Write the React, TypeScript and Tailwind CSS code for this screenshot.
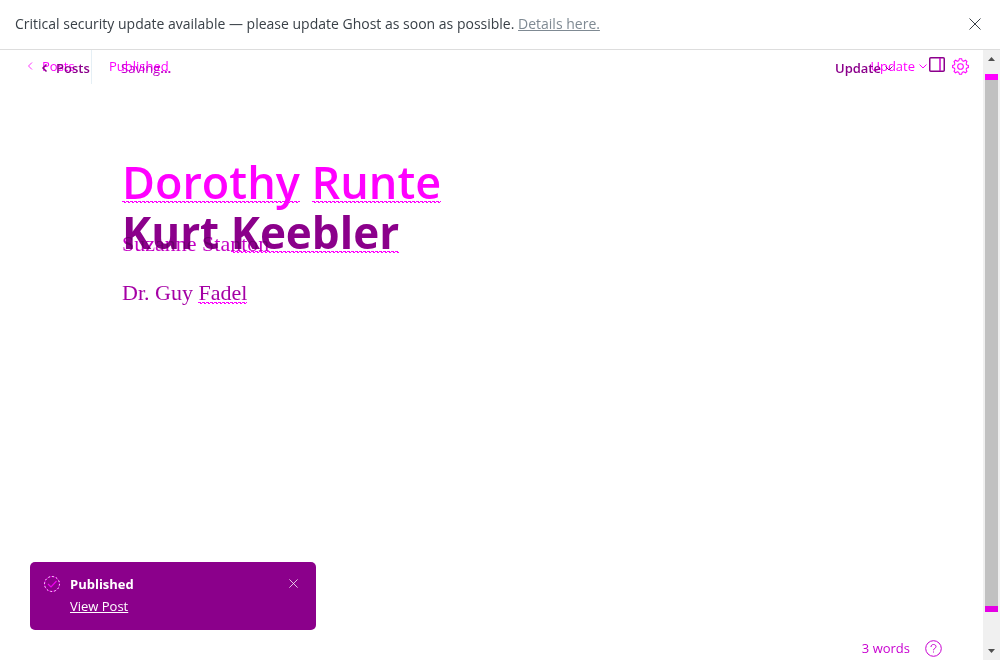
import React from "react";

function Squiggle() {
  return (
    <svg className="absolute left-0 bottom-0 h-[2px] w-full" aria-hidden="true" shapeRendering="crispEdges">
      <defs>
        <pattern id="squiggle" width="4" height="2" patternUnits="userSpaceOnUse">
          <rect x="0" y="0" width="3" height="1" fill="currentColor" />
          <rect x="2" y="1" width="2" height="1" fill="currentColor" />
        </pattern>
      </defs>
      <rect width="100%" height="2" fill="url(#squiggle)" />
    </svg>
  );
}

function Misspelled({ children, tone, box }: { children: string; tone: string; box: string }) {
  return (
    <span className={`relative inline-block ${box}`}>
      {children}
      <span className={tone}>
        <Squiggle />
      </span>
    </span>
  );
}

function Cross({ className }: { className: string }) {
  return (
    <svg className={className} viewBox="0 0 12 12" fill="none" stroke="currentColor" aria-hidden="true">
      <path d="M.5.5l11 11M11.5.5l-11 11" />
    </svg>
  );
}

function Gear() {
  return (
    <svg className="size-[17px]" viewBox="0 0 24 24" fill="none" stroke="currentColor" strokeWidth="1.5" aria-hidden="true">
      <circle cx="12" cy="12" r="4" />
      <path d="M13.6 1l.5 2a2.2 2.2 0 0 0 3 1.2l2-1 2 2-1 2a2.2 2.2 0 0 0 1 2.6l2 .6v3.2l-2 .6a2.2 2.2 0 0 0-1 2.6l1 2-2 2-2-1a2.2 2.2 0 0 0-3 1.2l-.5 2h-3.2l-.5-2a2.2 2.2 0 0 0-3-1.2l-2 1-2-2 1-2a2.2 2.2 0 0 0-1-2.6l-2-.6v-3.2l2-.6a2.2 2.2 0 0 0 1-2.6l-1-2 2-2 2 1a2.2 2.2 0 0 0 3-1.2l.5-2z" />
    </svg>
  );
}

function Banner() {
  return (
    <div className="flex h-[50px] shrink-0 items-center justify-between border-b border-[#dddddd] pr-[19px] pb-[1px] pl-[15px]">
      <p className="text-[14px] leading-[20px] text-[#394047]">
        Critical security update available — please update Ghost as soon as possible.{" "}
        <a href="#details" className="text-[#7f8a93] underline">
          Details here.
        </a>
      </p>
      <button type="button" aria-label="Dismiss" className="text-[#394047]">
        <Cross className="size-[12px]" />
      </button>
    </div>
  );
}

function Header() {
  return (
    <header className="grid h-[34px] shrink-0">
      <div className="col-start-1 row-start-1 flex items-center justify-between pr-[14px] pl-[27px] text-[13px] leading-[20px] text-[#ff00ff]">
        <div className="flex items-center self-stretch">
          <a href="#posts" className="flex w-[64px] items-center gap-[9px] pb-[2px]">
            <svg className="h-[8px] w-[6px]" viewBox="0 0 6 8" fill="none" stroke="currentColor" strokeWidth=".8" aria-hidden="true">
              <path d="M5 .5L1.5 4 5 7.5" />
            </svg>
            Posts
          </a>
          <span className="h-full w-px bg-[#e5eff5]" />
          <span className="pb-[2px] pl-[17px]">Published</span>
        </div>
        <div className="flex items-center gap-[25px] pb-[2px]">
          <button type="button" className="flex items-center gap-[4px]">
            Update
            <svg className="h-[5px] w-[8px]" viewBox="0 0 8 5" fill="none" stroke="currentColor" aria-hidden="true">
              <path d="M.5.5L4 4 7.5.5" />
            </svg>
          </button>
          <button type="button" aria-label="Settings">
            <Gear />
          </button>
        </div>
      </div>
      <div className="pointer-events-none col-start-1 row-start-1 flex items-center justify-between pt-[2px] pr-[38px] pl-[41px] text-[13px] leading-[20px] text-[#8b008b]">
        <div className="flex items-center">
          <a href="#posts" className="flex w-[80px] items-center gap-[8px] font-semibold">
            <svg className="h-[8px] w-[7px]" viewBox="0 0 7 8" fill="none" stroke="currentColor" strokeWidth="1.5" aria-hidden="true">
              <path d="M5.5.5L2 4l3.5 3.5" />
            </svg>
            Posts
          </a>
          <span className="text-[#c100c9]">
            Saving<b>...</b>
          </span>
        </div>
        <div className="flex items-center gap-[36px]">
          <button type="button" className="flex items-center gap-[4px] font-semibold">
            Update
            <svg className="h-[5px] w-[8px]" viewBox="0 0 8 5" fill="none" stroke="currentColor" aria-hidden="true">
              <path d="M.5.5L4 4 7.5.5" />
            </svg>
          </button>
          <button type="button" aria-label="Toggle sidebar" className="pb-[7px]">
            <svg className="h-[15px] w-[16px]" viewBox="0 0 16 15" fill="none" stroke="currentColor" strokeWidth="1.5" aria-hidden="true">
              <rect x=".75" y=".75" width="14.5" height="13.5" rx="1" />
              <path d="M11 1v13" stroke="#c800c8" />
            </svg>
          </button>
        </div>
      </div>
    </header>
  );
}

function Toast() {
  return (
    <div role="status" className="flex h-[68px] w-[286px] gap-[10px] rounded-[5px] bg-[#8b008b] px-[14px] pt-[12px] text-white">
      <svg className="mt-[2px] size-[16px] shrink-0" viewBox="0 0 16 16" fill="none" aria-hidden="true">
        <circle cx="8" cy="8" r="7.5" stroke="#d400d4" />
        <circle cx="8" cy="8" r="7.5" stroke="#fff" strokeDasharray="1.5 2.43" />
        <path d="M4 8L7 11l5.5-6" stroke="#f000f0" strokeWidth="1.2" />
      </svg>
      <div className="flex grow flex-col gap-[2px] text-[13px] leading-[20px]">
        <span className="font-bold">Published</span>
        <a href="#view" className="self-start underline">
          View Post
        </a>
      </div>
      <button type="button" aria-label="Close" className="mt-[5px] mr-[4px] self-start">
        <Cross className="size-[9px]" />
      </button>
    </div>
  );
}

function Scrollbar() {
  return (
    <div className="flex w-[17px] shrink-0 flex-col items-center bg-[#f0f0f0] py-[7px]" aria-hidden="true">
      <svg className="h-[4px] w-[7px] shrink-0" viewBox="0 0 7 4">
        <path d="M0 4L3.5 0 7 4z" fill="#505050" />
      </svg>
      <div className="mt-[13px] mb-[37px] w-[13px] grow border-y-[6px] border-t-[#ff00ff] border-b-[#e400e4] bg-[#c1c1c1]" />
      <svg className="h-[4px] w-[7px] shrink-0" viewBox="0 0 7 4">
        <path d="M0 0L3.5 4 7 0z" fill="#505050" />
      </svg>
    </div>
  );
}

export default function App() {
  return (
    <div className="flex h-screen flex-col bg-white font-['Open_Sans','Noto_Sans',sans-serif]">
      <Banner />
      <div className="flex min-h-0 grow">
        <div className="flex min-w-0 grow flex-col">
          <Header />
          <main className="grow px-[122px] pt-[73px]">
            <h1 className="text-[45px] leading-[50px] font-semibold text-[#ff00ff]">
              <Misspelled tone="text-[#ff00ff]" box="h-[46px] mb-[4px] align-top">Dorothy</Misspelled>{" "}
              <Misspelled tone="text-[#ff00ff]" box="h-[46px] mb-[4px] align-top">Runte</Misspelled>
            </h1>
            <div className="relative">
              <h1 className="text-[44px] leading-[50px] font-bold text-[#8b008b]">
                Kurt <Misspelled tone="text-[#ff0099]" box="h-[46px] mb-[4px] align-top">Keebler</Misspelled>
              </h1>
              <p className="absolute top-[21px] left-0 font-['Liberation_Serif',serif] text-[22px] leading-[32px] text-[#c400c4] mix-blend-multiply">
                Suzanne Stanton
              </p>
            </div>
            <p className="pt-[20px] font-['Liberation_Serif',serif] text-[22px] leading-[32px] text-[#a500a5]">
              Dr. Guy <Misspelled tone="text-[#ff00aa]" box="h-[27px] align-top">Fadel</Misspelled>
            </p>
          </main>
          <footer className="flex items-end justify-between pr-[41px] pl-[30px]">
            <div className="pb-[30px]">
              <Toast />
            </div>
            <div className="flex items-center gap-[15px] pb-[2px] text-[13px] leading-[20px] text-[#c800d0]">
              <span>3 words</span>
              <button type="button" aria-label="Help">
                <svg className="size-[17px]" viewBox="0 0 17 17" fill="none" stroke="currentColor" aria-hidden="true">
                  <circle cx="8.5" cy="8.5" r="7.8" />
                  <path d="M6 7C6 5.3 7 4.5 8.5 4.5S11 5.3 11 6.7C11 8.3 8.5 8.3 8.5 10.3M8.5 11.5v1" />
                </svg>
              </button>
            </div>
          </footer>
        </div>
        <Scrollbar />
      </div>
    </div>
  );
}
